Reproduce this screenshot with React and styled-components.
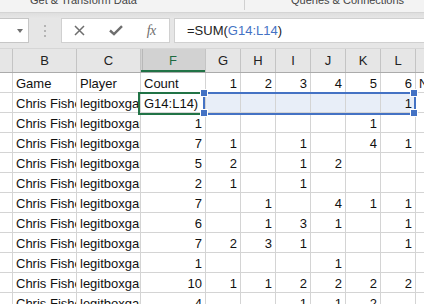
import React from "react";
import styled, { createGlobalStyle } from "styled-components";

const Global = createGlobalStyle`
  html, body { margin: 0; padding: 0; background: #ffffff; }
  body { width: 424px; height: 304px; overflow: hidden; font-family: "Liberation Sans", Arial, sans-serif; }
`;

const Page = styled.div`
  width: 424px;
  height: 304px;
  overflow: hidden;
  display: flex;
  flex-direction: column;
`;

const Ribbon = styled.div`
  height: 12px;
  flex: none;
  background: #f3f3f3;
  border-bottom: 1px solid #d4d4d4;
  display: flex;
  align-items: flex-start;
  overflow: hidden;
  position: relative;
`;

const GroupLabel = styled.div`
  font-size: 11px;
  line-height: 12px;
  margin-top: -6px;
  color: #444444;
  white-space: nowrap;
  margin-left: ${(p) => p.$ml}px;
`;

const GroupDivider = styled.div`
  width: 1px;
  height: 10px;
  background: #d0d0d0;
  margin-left: ${(p) => p.$ml}px;
`;

const FormulaArea = styled.div`
  flex: none;
  height: 25px;
  padding: 5px 0;
  background: linear-gradient(#dedede, #e6e6e6 5px, #e6e6e6);
  display: flex;
  align-items: stretch;
`;

const NameBox = styled.div`
  width: 39px;
  margin-left: -10px;
  box-sizing: border-box;
  background: #ffffff;
  border: 1px solid #c6c6c6;
  display: flex;
  align-items: center;
  justify-content: flex-end;
  padding-right: 5px;
`;

const Caret = styled.div`
  width: 0;
  height: 0;
  border-left: 3.5px solid transparent;
  border-right: 3.5px solid transparent;
  border-top: 4px solid #707070;
`;

const Grip = styled.div`
  width: 32px;
  display: flex;
  flex-direction: column;
  align-items: center;
  justify-content: center;
  gap: 3px;
  span {
    width: 2px;
    height: 2px;
    background: #b4b4b4;
  }
`;

const ButtonBox = styled.div`
  width: 109px;
  box-sizing: border-box;
  background: #ffffff;
  border: 1px solid #d0d0d0;
  display: flex;
`;

const IconSlot = styled.div`
  width: 36px;
  display: flex;
  align-items: center;
  justify-content: center;
  color: #707070;
`;

const Fx = styled.span`
  font-family: "Liberation Serif", "Times New Roman", serif;
  font-style: italic;
  font-size: 14px;
  color: #6e6e6e;
  letter-spacing: -0.5px;
`;

const Input = styled.div`
  flex: 1;
  margin-left: 4px;
  margin-right: -2px;
  background: #ffffff;
  border: 1px solid #d0d0d0;
  padding-left: 12px;
  font-size: 13px;
  line-height: 23px;
  color: #222222;
  white-space: nowrap;
`;

const Ref = styled.span`
  color: #4472c4;
`;

const Sheet = styled.div`
  position: relative;
  flex: 1;
  overflow: hidden;
`;

const COLS = "13px 64px 64px 65px repeat(6, 35px) 64px";

const HeaderRow = styled.div`
  display: grid;
  grid-template-columns: ${COLS};
  height: 25px;
  box-sizing: border-box;
  background: #e6e6e6;
  border-top: 1px solid #d6d6d6;
  border-bottom: 1px solid #ababab;
`;

const ColHead = styled.div`
  box-sizing: border-box;
  border-right: 1px solid #c4c4c4;
  display: flex;
  align-items: center;
  justify-content: center;
  font-size: 13px;
  color: ${(p) => (p.$active ? "#1e6b41" : "#222222")};
  background: ${(p) => (p.$active ? "#d2d2d2" : "transparent")};
  box-shadow: ${(p) => (p.$active ? "inset 0 -2px 0 #217346" : "none")};
  ${(p) =>
    p.$gap
      ? "background-image: linear-gradient(to right, transparent 1px, #b8b8b8 1px, #b8b8b8 2px, transparent 2px);"
      : ""}
`;

const Row = styled.div`
  display: grid;
  grid-template-columns: ${COLS};
  height: 20px;
`;

const Cell = styled.div`
  box-sizing: border-box;
  border-right: 1px solid #d4d4d4;
  border-bottom: 1px solid #d4d4d4;
  background: ${(p) => (p.$sel ? "#e8eef8" : "#ffffff")};
  font-size: 13px;
  line-height: 16px;
  padding: 3px 3px 0 3px;
  text-align: ${(p) => (p.$num ? "right" : "left")};
  white-space: nowrap;
  overflow: hidden;
  color: #111111;
`;

const RangeBox = styled.div`
  position: absolute;
  left: 203px;
  top: 44px;
  width: 213px;
  height: 23px;
  box-sizing: border-box;
  border: 2px solid #4472c4;
  pointer-events: none;
`;

const ActiveBox = styled.div`
  position: absolute;
  left: 138px;
  top: 44px;
  width: 67px;
  height: 23px;
  box-sizing: border-box;
  border: 2px solid #217346;
  pointer-events: none;
`;

const Handle = styled.div`
  position: absolute;
  width: 6px;
  height: 6px;
  background: #4472c4;
  outline: 1px solid #ffffff;
  left: ${(p) => p.$x - 3}px;
  top: ${(p) => p.$y - 3}px;
`;

const letters = ["", "B", "C", "F", "G", "H", "I", "J", "K", "L", "M"];

const rows = [
  ["", "Game", "Player", "Count", "1", "2", "3", "4", "5", "6", "N"],
  ["", "Chris Fisher", "legitboxgames", "G14:L14)", "", "", "", "", "", "1", ""],
  ["", "Chris Fisher", "legitboxgames", "1", "", "", "", "", "1", "", ""],
  ["", "Chris Fisher", "legitboxgames", "7", "1", "", "1", "", "4", "1", ""],
  ["", "Chris Fisher", "legitboxgames", "5", "2", "", "1", "2", "", "", ""],
  ["", "Chris Fisher", "legitboxgames", "2", "1", "", "1", "", "", "", ""],
  ["", "Chris Fisher", "legitboxgames", "7", "", "1", "", "4", "1", "1", ""],
  ["", "Chris Fisher", "legitboxgames", "6", "", "1", "3", "1", "", "1", ""],
  ["", "Chris Fisher", "legitboxgames", "7", "2", "3", "1", "", "", "1", ""],
  ["", "Chris Fisher", "legitboxgames", "1", "", "", "", "1", "", "", ""],
  ["", "Chris Fisher", "legitboxgames", "10", "1", "1", "2", "2", "2", "2", ""],
  ["", "Chris Fisher", "legitboxgames", "4", "", "", "1", "1", "2", "", ""],
];

const isNum = (v, ri, ci) => {
  if (ri === 1 && ci === 3) return false;
  return /^\d+$/.test(v);
};

export default function App() {
  return (
    <Page>
      <Global />
      <Ribbon>
        <GroupLabel $ml={30}>Get &amp; Transform Data</GroupLabel>
        <GroupDivider $ml={107} />
        <GroupLabel $ml={46}>Queries &amp; Connections</GroupLabel>
      </Ribbon>
      <FormulaArea>
        <NameBox>
          <Caret />
        </NameBox>
        <Grip>
          <span />
          <span />
          <span />
        </Grip>
        <ButtonBox>
          <IconSlot>
            <svg width="11" height="11" viewBox="0 0 11 11">
              <path d="M1 1 L10 10 M10 1 L1 10" stroke="#6e6e6e" strokeWidth="1.5" fill="none" />
            </svg>
          </IconSlot>
          <IconSlot>
            <svg width="14" height="11" viewBox="0 0 14 11">
              <path d="M1 5.5 L5 9.2 L13 1.2" stroke="#6e6e6e" strokeWidth="2.4" fill="none" />
            </svg>
          </IconSlot>
          <IconSlot>
            <Fx>fx</Fx>
          </IconSlot>
        </ButtonBox>
        <Input>
          =SUM(<Ref>G14:L14</Ref>)
        </Input>
      </FormulaArea>
      <Sheet>
        <HeaderRow>
          {letters.map((l, i) => (
            <ColHead key={i} $active={l === "F"} $gap={l === "F"}>
              {l}
            </ColHead>
          ))}
        </HeaderRow>
        {rows.map((r, ri) => (
          <Row key={ri}>
            {r.map((v, ci) => (
              <Cell key={ci} $num={isNum(v, ri, ci)} $sel={ri === 1 && ci >= 4 && ci <= 9}>
                {v}
              </Cell>
            ))}
          </Row>
        ))}
        <ActiveBox />
        <RangeBox />
        <Handle $x={204} $y={45} />
        <Handle $x={204} $y={65} />
        <Handle $x={414} $y={45} />
        <Handle $x={414} $y={65} />
      </Sheet>
    </Page>
  );
}
